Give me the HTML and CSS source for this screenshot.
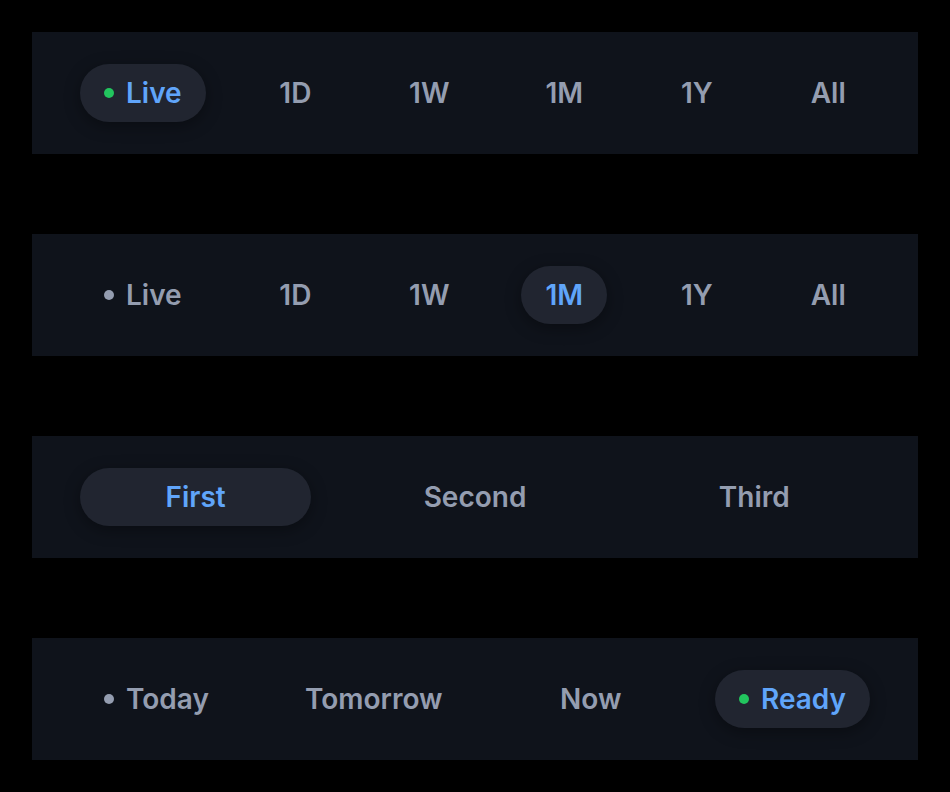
FILE: index.html
```html
<!DOCTYPE html>
<html lang="en">
<head>
<meta charset="utf-8">
<title>Segmented controls</title>
<link rel="stylesheet" href="styles.css">
</head>
<body>
  <div class="stack">
    <div class="seg">
      <button class="item active"><span class="dot live"></span>Live</button>
      <button class="item">1D</button>
      <button class="item">1W</button>
      <button class="item">1M</button>
      <button class="item">1Y</button>
      <button class="item">All</button>
    </div>
    <div class="seg">
      <button class="item"><span class="dot"></span>Live</button>
      <button class="item">1D</button>
      <button class="item">1W</button>
      <button class="item active">1M</button>
      <button class="item">1Y</button>
      <button class="item">All</button>
    </div>
    <div class="seg">
      <button class="item active">First</button>
      <button class="item">Second</button>
      <button class="item">Third</button>
    </div>
    <div class="seg">
      <button class="item"><span class="dot"></span>Today</button>
      <button class="item">Tomorrow</button>
      <button class="item">Now</button>
      <button class="item active"><span class="dot live"></span>Ready</button>
    </div>
  </div>
</body>
</html>
```
FILE: styles.css
```css
html, body {
  margin: 0;
  padding: 0;
  background: #000;
}
body {
  padding: 32px;
  font-family: Inter, "Noto Sans", sans-serif;
}
.stack {
  display: flex;
  flex-direction: column;
  gap: 80px;
}
.seg {
  display: flex;
  gap: 48px;
  padding: 32px 48px;
  background: #0f131b;
}
.item {
  flex: 1 1 0;
  display: flex;
  align-items: center;
  justify-content: center;
  gap: 12px;
  height: 58px;
  padding: 0 24px;
  border: 0;
  border-radius: 29px;
  background: transparent;
  color: #949db0;
  font-family: inherit;
  font-size: 28px;
  font-weight: 600;
  white-space: nowrap;
}
.item.active {
  background: #212530;
  color: #60a5fa;
  box-shadow: 0 4px 16px rgba(0, 0, 0, 0.35);
}
.dot {
  width: 10px;
  height: 10px;
  border-radius: 50%;
  background: currentColor;
  flex: none;
}
.dot.live {
  background: #22c55e;
}
```
